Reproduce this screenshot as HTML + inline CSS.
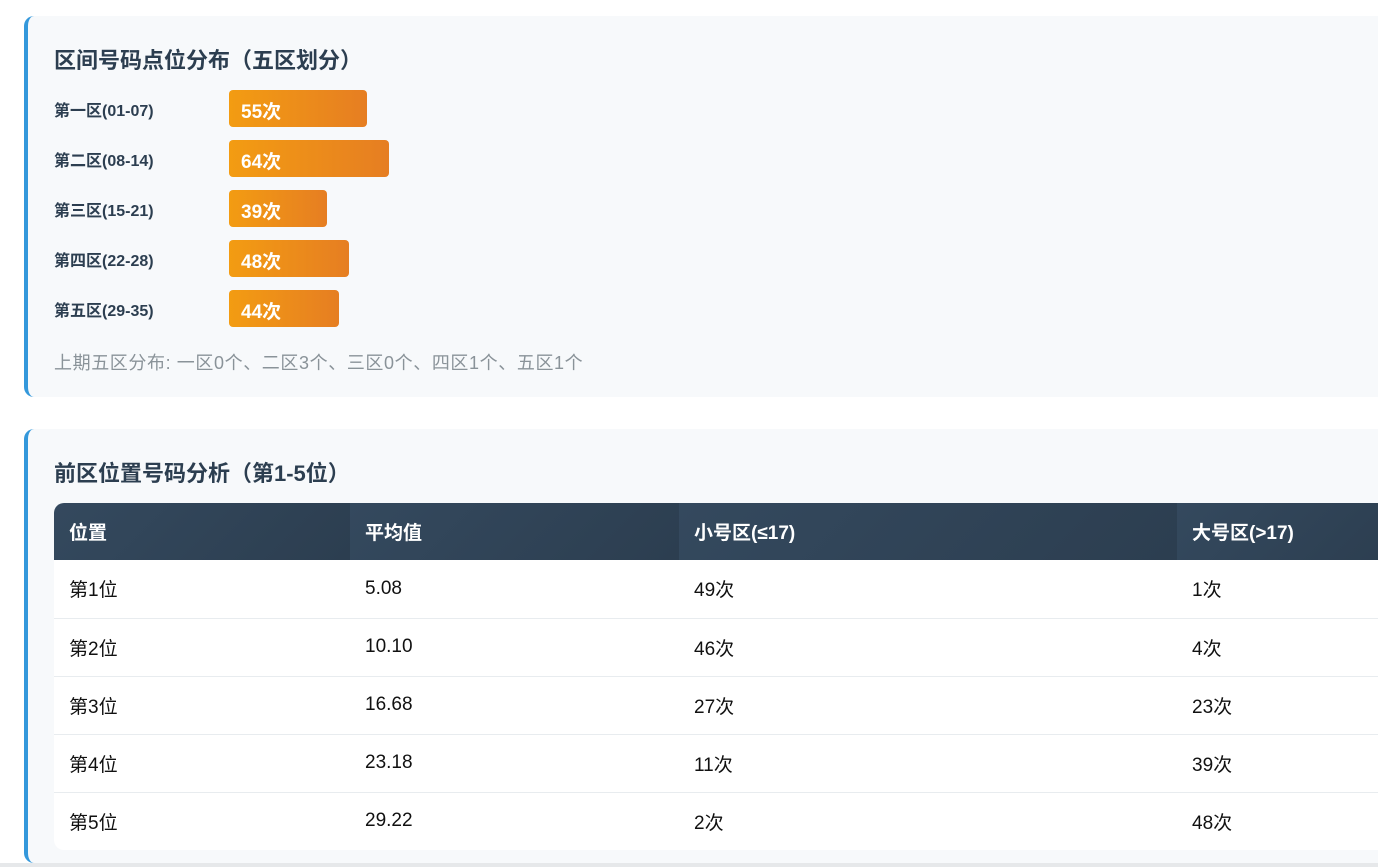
<!DOCTYPE html>
<html><head><meta charset="utf-8"><style>
*{box-sizing:border-box;margin:0;padding:0}
body{width:1378px;height:867px;overflow:hidden;background:#fff;font-family:"Liberation Sans","Noto Sans CJK SC",sans-serif;position:relative}
.card{position:absolute;left:24px;width:1380px;background:#f7f9fb;border-left:4px solid #3498db;border-radius:10px 0 0 10px}
h3{position:absolute;left:26px;font-size:22px;font-weight:bold;color:#2c3e50}
.row{position:absolute;left:26px;height:37px;display:flex;align-items:center}
.lbl{width:175px;font-size:16px;font-weight:bold;color:#2c3e50}
.lbl span{font-weight:bold;font-size:16px}
.bar{height:37px;border-radius:4px;background:linear-gradient(90deg,#f39c12,#e67e22);color:#fff;font-weight:bold;font-size:19px;display:flex;align-items:center;padding:3px 0 0 12px}
.note{position:absolute;left:26px;top:333px;font-size:18px;color:#8a9399;letter-spacing:0.6px}
table{position:absolute;left:26px;top:74px;width:1340px;border-collapse:collapse;background:#fff;border-radius:10px 0 0 10px;overflow:hidden}
th{height:57px;text-align:left;color:#fff;font-size:19px;padding-left:15px;background:linear-gradient(135deg,#34495e,#2c3e50)}
td{height:58px;font-size:19px;color:#111;padding-left:15px;border-bottom:1px solid #e8ecef}
tr:last-child td{border-bottom:none}
</style></head><body>
<div class="card" style="top:16px;height:381px">
<h3 style="top:27px">区间号码点位分布（五区划分）</h3>
<div class="row" style="top:74px"><div class="lbl">第一区<span>(01-07)</span></div><div class="bar" style="width:138px">55次</div></div>
<div class="row" style="top:124px"><div class="lbl">第二区<span>(08-14)</span></div><div class="bar" style="width:160px">64次</div></div>
<div class="row" style="top:174px"><div class="lbl">第三区<span>(15-21)</span></div><div class="bar" style="width:98px">39次</div></div>
<div class="row" style="top:224px"><div class="lbl">第四区<span>(22-28)</span></div><div class="bar" style="width:120px">48次</div></div>
<div class="row" style="top:274px"><div class="lbl">第五区<span>(29-35)</span></div><div class="bar" style="width:110px">44次</div></div>
<div class="note">上期五区分布: 一区0个、二区3个、三区0个、四区1个、五区1个</div>
</div>
<div class="card" style="top:429px;height:434px">
<h3 style="top:27px">前区位置号码分析（第1-5位）</h3>
<table>
<tr><th style="width:296px">位置</th><th style="width:329px">平均值</th><th style="width:498px">小号区(≤17)</th><th>大号区(&gt;17)</th></tr>
<tr><td>第1位</td><td>5.08</td><td>49次</td><td>1次</td></tr>
<tr><td>第2位</td><td>10.10</td><td>46次</td><td>4次</td></tr>
<tr><td>第3位</td><td>16.68</td><td>27次</td><td>23次</td></tr>
<tr><td>第4位</td><td>23.18</td><td>11次</td><td>39次</td></tr>
<tr><td>第5位</td><td>29.22</td><td>2次</td><td>48次</td></tr>
</table>
</div>
<div style="position:absolute;left:0;top:863px;width:1378px;height:4px;background:#e6e8ea"></div>
</body></html>
